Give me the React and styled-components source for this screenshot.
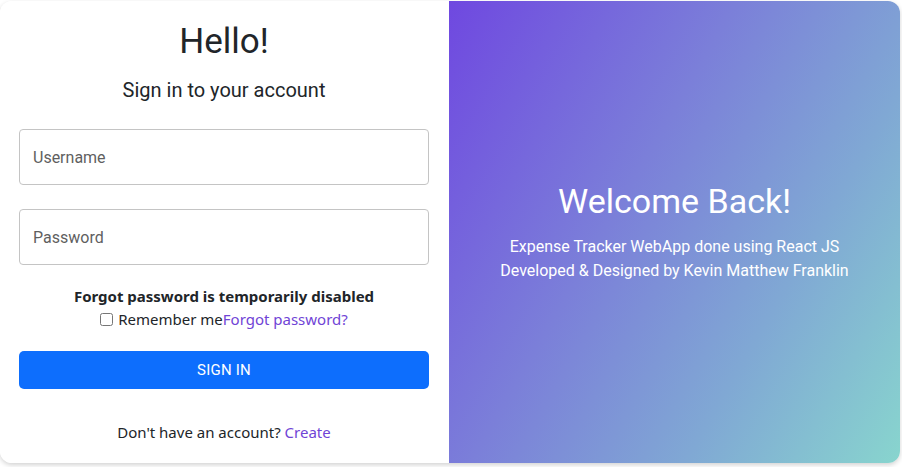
import React from "react";
import styled, { createGlobalStyle } from "styled-components";

const GlobalStyle = createGlobalStyle`
  body {
    margin: 0;
    background: #ffffff;
    font-family: Roboto, "Liberation Sans", sans-serif;
  }
`;

const Page = styled.div`
  padding: 1px 2px 4px 0;
`;

const Card = styled.div`
  display: grid;
  grid-template-columns: 449px 1fr;
  width: 900px;
  height: 462px;
  border-radius: 12px;
  overflow: hidden;
  box-shadow: 0 2px 5px rgba(0, 0, 0, 0.18);
`;

const FormPanel = styled.div`
  background: #ffffff;
  display: flex;
  flex-direction: column;
  align-items: center;
  padding: 0 20px 0 19px;
`;

const Title = styled.h1`
  margin: 21px 0 0;
  font-weight: 400;
  font-size: 35px;
  line-height: 40px;
  color: #212529;
`;

const Subtitle = styled.h2`
  margin: 16px 0 0;
  font-weight: 400;
  font-size: 20px;
  line-height: 24px;
  color: #212529;
`;

const Field = styled.input`
  box-sizing: border-box;
  width: 100%;
  height: 56px;
  margin-top: ${(p) => p.$top}px;
  padding: 0 13px;
  border: 1px solid #c4c4c4;
  border-radius: 4px;
  font-family: Roboto, "Liberation Sans", sans-serif;
  font-size: 16px;
  color: #212529;
  &::placeholder {
    color: #5f5f5f;
  }
`;

const Notice = styled.p`
  margin: 21px 0 0;
  font-family: "Noto Sans", "Open Sans", sans-serif;
  font-weight: 700;
  font-size: 15px;
  line-height: 20px;
  color: #212529;
`;

const RememberRow = styled.div`
  display: flex;
  align-items: center;
  margin-top: 3px;
  font-family: "Noto Sans", "Open Sans", sans-serif;
  font-size: 15px;
  line-height: 20px;
  color: #212529;
`;

const Check = styled.input`
  width: 13px;
  height: 13px;
  margin: 0 5px 0 0;
`;

const Link = styled.a`
  color: #7044d6;
  text-decoration: none;
`;

const SignInButton = styled.button`
  width: 100%;
  height: 38px;
  margin-top: 22px;
  border: none;
  border-radius: 5px;
  background: #0d6efd;
  color: #ffffff;
  font-family: Roboto, "Liberation Sans", sans-serif;
  font-size: 15px;
  letter-spacing: 0.2px;
`;

const Footer = styled.p`
  margin: 33px 0 0;
  font-family: "Noto Sans", "Open Sans", sans-serif;
  font-size: 15px;
  line-height: 20px;
  color: #212529;
`;

const WelcomePanel = styled.div`
  background: linear-gradient(120deg, #6f48e0 0%, #7b7fd9 40%, #80a8d4 70%, #88d5ce 100%);
  display: flex;
  flex-direction: column;
  align-items: center;
  justify-content: center;
  color: #ffffff;
`;

const WelcomeTitle = styled.h2`
  margin: 0;
  font-weight: 400;
  font-size: 34px;
  line-height: 40px;
`;

const WelcomeText = styled.p`
  margin: 14px 0 0;
  font-size: 16px;
  line-height: 24px;
  text-align: center;
`;

export default function App() {
  return (
    <Page>
      <GlobalStyle />
      <Card>
        <FormPanel>
          <Title>Hello!</Title>
          <Subtitle>Sign in to your account</Subtitle>
          <Field $top={27} type="text" placeholder="Username" />
          <Field $top={24} type="password" placeholder="Password" />
          <Notice>Forgot password is temporarily disabled</Notice>
          <RememberRow>
            <Check type="checkbox" />
            Remember me<Link href="#">Forgot password?</Link>
          </RememberRow>
          <SignInButton>SIGN IN</SignInButton>
          <Footer>
            Don't have an account? <Link href="#">Create</Link>
          </Footer>
        </FormPanel>
        <WelcomePanel>
          <WelcomeTitle>Welcome Back!</WelcomeTitle>
          <WelcomeText>
            Expense Tracker WebApp done using React JS
            <br />
            Developed &amp; Designed by Kevin Matthew Franklin
          </WelcomeText>
        </WelcomePanel>
      </Card>
    </Page>
  );
}
